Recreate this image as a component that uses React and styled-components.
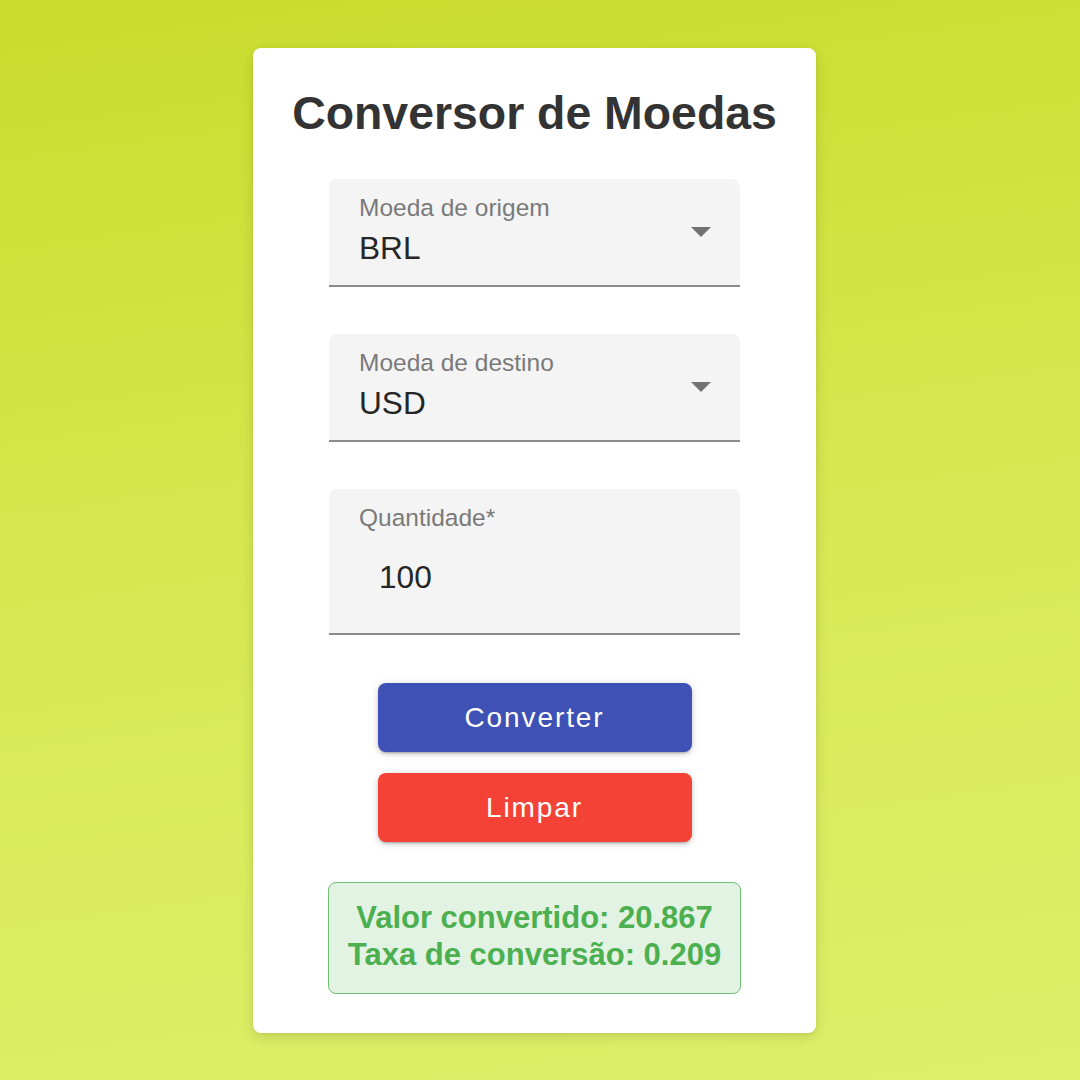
import React from "react";
import styled, { createGlobalStyle } from "styled-components";

const GlobalStyle = createGlobalStyle`
  html, body { margin: 0; padding: 0; }
  body {
    font-family: "Liberation Sans", Arial, sans-serif;
    background: linear-gradient(172deg, #c9dc2c 0%, #d7ea55 55%, #ddef6a 100%);
    min-height: 1080px;
  }
`;

const Page = styled.div`
  width: 1069px;
  min-height: 1080px;
  display: flex;
  justify-content: center;
  align-items: flex-start;
  padding-top: 48px;
  box-sizing: border-box;
`;

const Card = styled.div`
  width: 563px;
  box-sizing: border-box;
  background: #ffffff;
  border-radius: 8px;
  box-shadow: 0 4px 14px rgba(0, 0, 0, 0.12), 0 1px 3px rgba(0, 0, 0, 0.06);
  padding: 38px 20px 39px;
  display: flex;
  flex-direction: column;
  align-items: center;
`;

const Title = styled.h1`
  margin: 0 0 38px;
  font-family: "Liberation Sans", Arial, sans-serif;
  font-weight: 700;
  font-size: 46.4px;
  line-height: 55px;
  color: #333333;
  text-align: center;
`;

const Form = styled.div`
  width: 411px;
  display: flex;
  flex-direction: column;
  align-items: center;
`;

const Field = styled.div`
  position: relative;
  width: 100%;
  box-sizing: border-box;
  height: ${(p) => p.$height}px;
  margin-bottom: ${(p) => p.$mb}px;
  background: #f4f4f4;
  border-radius: 8px 8px 0 0;
  border-bottom: 2px solid #8c8c8c;
  padding: 17px 0 0 30px;
  display: flex;
  flex-direction: column;
`;

const Label = styled.div`
  font-size: 24.5px;
  line-height: 24px;
  color: #7a7a7a;
  margin-bottom: ${(p) => p.$gap}px;
`;

const Value = styled.div`
  font-size: 31.6px;
  line-height: 31px;
  color: #262626;
  padding-left: ${(p) => p.$indent || 0}px;
`;

const Arrow = styled.div`
  position: absolute;
  right: 29px;
  top: 50%;
  margin-top: -5px;
  width: 0;
  height: 0;
  border-left: 10px solid transparent;
  border-right: 10px solid transparent;
  border-top: 10px solid #727272;
`;

const Button = styled.button`
  width: 314px;
  height: 69px;
  border: none;
  border-radius: 8px;
  background: ${(p) => p.$bg};
  color: #ffffff;
  font-family: "Liberation Sans", Arial, sans-serif;
  font-size: 28px;
  letter-spacing: 1.9px;
  display: flex;
  align-items: center;
  justify-content: center;
  box-shadow: 0 3px 2px -2px rgba(0, 0, 0, 0.2), 0 2px 4px 0 rgba(0, 0, 0, 0.14),
    0 1px 10px 0 rgba(0, 0, 0, 0.12);
  margin-top: ${(p) => p.$mt}px;
  padding: 0;
  cursor: pointer;
`;

const Result = styled.div`
  margin-top: 40px;
  width: 413px;
  box-sizing: border-box;
  background: #e2f3e3;
  border: 1.5px solid #6cc070;
  border-radius: 8px;
  padding: 17px 4px 20px;
  text-align: center;
  color: #4caf50;
  font-weight: 700;
  font-size: 31px;
  line-height: 36.6px;
`;

export default function App() {
  return (
    <>
      <GlobalStyle />
      <Page>
        <Card>
          <Title>Conversor de Moedas</Title>
          <Form>
            <Field $height={108} $mb={47}>
              <Label $gap={13}>Moeda de origem</Label>
              <Value>BRL</Value>
              <Arrow />
            </Field>
            <Field $height={108} $mb={47}>
              <Label $gap={13}>Moeda de destino</Label>
              <Value>USD</Value>
              <Arrow />
            </Field>
            <Field $height={146} $mb={48}>
              <Label $gap={32}>Quantidade*</Label>
              <Value $indent={20}>100</Value>
            </Field>
            <Button $bg="#3f51b5" $mt={0}>Converter</Button>
            <Button $bg="#f44336" $mt={21}>Limpar</Button>
            <Result>
              Valor convertido: 20.867
              <br />
              Taxa de conversão: 0.209
            </Result>
          </Form>
        </Card>
      </Page>
    </>
  );
}
